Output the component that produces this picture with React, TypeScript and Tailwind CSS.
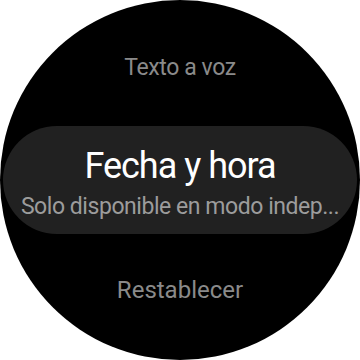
import React from "react";

export default function App() {
  return (
    <div className="w-[360px] h-[360px] bg-white">
      <div className="w-[360px] h-[360px] rounded-full bg-black overflow-hidden flex flex-col items-center font-[Roboto,sans-serif]">
        <div className="mt-[56px] text-[23px] leading-none tracking-[-0.4px] text-[#8a8a8a] whitespace-nowrap">
          Texto a voz
        </div>
        <div className="mt-[47px] w-[354px] h-[108px] rounded-full bg-[#212121] flex flex-col items-center">
          <div className="mt-[22px] text-[36px] leading-none tracking-[-1px] text-white whitespace-nowrap">
            Fecha y hora
          </div>
          <div className="mt-[11px] text-[23px] leading-none tracking-[-0.45px] text-[#9c9c9c] whitespace-nowrap">
            Solo disponible en modo indep...
          </div>
        </div>
        <div className="mt-[44px] text-[24px] leading-none text-[#8a8a8a] whitespace-nowrap">
          Restablecer
        </div>
      </div>
    </div>
  );
}
